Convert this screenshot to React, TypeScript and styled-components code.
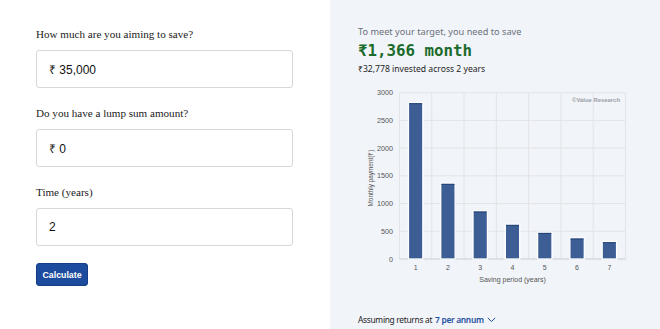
import styled, { createGlobalStyle } from 'styled-components';

const GlobalStyle = createGlobalStyle`
  html, body {
    margin: 0;
    padding: 0;
    background: #ffffff;
  }
  * {
    box-sizing: border-box;
  }
`;

const Page = styled.div`
  display: flex;
  width: 660px;
  height: 329px;
  overflow: hidden;
`;

const FormPanel = styled.section`
  width: 330px;
  display: flex;
  flex-direction: column;
  align-items: flex-start;
  padding: 26px 37px 0 36px;
  background: #ffffff;
`;

const Field = styled.div`
  width: 100%;
  display: flex;
  flex-direction: column;
  margin-bottom: 17px;
`;

const Label = styled.label`
  font-family: "Liberation Serif", "Times New Roman", serif;
  font-size: 11.1px;
  line-height: 16px;
  color: #1a1a1a;
  margin-bottom: 8px;
`;

const InputBox = styled.div`
  height: 38px;
  width: 100%;
  display: flex;
  align-items: center;
  padding: 0 12px;
  border: 1px solid #d7d7d7;
  border-radius: 3px;
  font-family: "Liberation Sans", Arial, sans-serif;
  font-size: 12px;
  color: #111;
`;

const Button = styled.button`
  width: 52px;
  height: 23px;
  padding: 0;
  border: 1px solid #143e86;
  border-radius: 3px;
  background: #1d4b9d;
  color: #ffffff;
  font-family: "Liberation Sans", Arial, sans-serif;
  font-weight: 700;
  font-size: 8.8px;
`;

const ResultPanel = styled.section`
  flex: 1;
  display: flex;
  flex-direction: column;
  padding: 25px 0 0 28px;
  background: #f1f4f9;
  font-family: "Noto Sans", "Open Sans", sans-serif;
`;

const Lead = styled.div`
  font-size: 9.2px;
  line-height: 14px;
  color: #6b717b;
`;

const Amount = styled.div`
  font-family: "DejaVu Sans Mono", "Liberation Mono", monospace;
  font-weight: 700;
  font-size: 15.8px;
  line-height: 22px;
  color: #1b6b2b;
  margin-top: 1px;
`;

const Sub = styled.div`
  font-size: 8.6px;
  line-height: 14px;
  color: #1e1e1e;
`;

const ChartSvg = styled.svg`
  display: block;
  margin-top: 8px;
`;

const Footer = styled.div`
  display: flex;
  align-items: center;
  gap: 3px;
  margin-top: 23px;
  font-size: 8.4px;
  letter-spacing: -0.3px;
  line-height: 14px;
  color: #1e1e1e;
`;

const Accent = styled.span`
  color: #1d4f9e;
  font-weight: 600;
`;

const values = [2820, 1366, 866, 626, 481, 379, 312];

const Chart = () => {
  const left = 41.5;
  const right = 267.5;
  const top = 8.7;
  const bottom = 175;
  const colW = (right - left) / 7;
  const scale = (bottom - top) / 3000;
  const ticks = [0, 500, 1000, 1500, 2000, 2500, 3000];
  const barW = 14.4;

  return (
    <ChartSvg width={282} height={206} viewBox="0 0 282 206">
      {ticks.map((t) => (
        <line key={t} x1={left} x2={right} y1={bottom - t * scale} y2={bottom - t * scale} stroke="#e2e4e8" strokeWidth={1} />
      ))}
      {Array.from({ length: 8 }).map((_, i) => (
        <line key={i} x1={left + i * colW} x2={left + i * colW} y1={top} y2={bottom} stroke="#e2e4e8" strokeWidth={1} />
      ))}
      <line x1={left} x2={right} y1={bottom} y2={bottom} stroke="#cfd3da" strokeWidth={1} />
      {ticks.map((t) => (
        <text
          key={t}
          x={35}
          y={bottom - t * scale + 2.5}
          textAnchor="end"
          fontSize={7.2}
          fill="#555"
          fontFamily="'Liberation Sans', Arial, sans-serif"
        >
          {t}
        </text>
      ))}
      {values.map((v, i) => {
        const cx = left + colW * (i + 0.5);
        const h = v * scale;
        return (
          <g key={i}>
            <rect x={cx - barW / 2} y={bottom - h} width={barW} height={h} fill="#3d5e94" stroke="#ffffff" strokeWidth={1.3} />
            <line x1={cx - barW / 2 + 0.7} x2={cx + barW / 2 - 0.7} y1={bottom - h + 1} y2={bottom - h + 1} stroke="#1f3f75" strokeWidth={1} />
            <text
              x={cx}
              y={185.5}
              textAnchor="middle"
              fontSize={7}
              fill="#555"
              fontFamily="'Liberation Sans', Arial, sans-serif"
            >
              {i + 1}
            </text>
          </g>
        );
      })}
      <text
        x={154.5}
        y={197.5}
        textAnchor="middle"
        fontSize={7}
        fill="#555"
        fontFamily="'Liberation Sans', Arial, sans-serif"
      >
        Saving period (years)
      </text>
      <text
        transform="translate(14.5 94) rotate(-90)"
        textAnchor="middle"
        fontSize={6.4}
        fill="#555"
        fontFamily="'Liberation Sans', Arial, sans-serif"
      >
        Monthly payment(₹)
      </text>
      <text
        x={262}
        y={18}
        textAnchor="end"
        fontSize={5.9}
        fontWeight={700}
        fill="#9a9ea6"
        fontFamily="'Liberation Sans', Arial, sans-serif"
      >
        ©Value Research
      </text>
    </ChartSvg>
  );
};

const Chevron = () => (
  <svg width={9} height={6} viewBox="0 0 9 6">
    <path d="M0.8 0.8 L4.5 4.6 L8.2 0.8" fill="none" stroke="#1d4f9e" strokeWidth={1} />
  </svg>
);

const App = () => {
  return (
    <>
      <GlobalStyle />
      <Page>
        <FormPanel>
          <Field>
            <Label>How much are you aiming to save?</Label>
            <InputBox>₹ 35,000</InputBox>
          </Field>
          <Field>
            <Label>Do you have a lump sum amount?</Label>
            <InputBox>₹ 0</InputBox>
          </Field>
          <Field>
            <Label>Time (years)</Label>
            <InputBox>2</InputBox>
          </Field>
          <Button>Calculate</Button>
        </FormPanel>
        <ResultPanel>
          <Lead>To meet your target, you need to save</Lead>
          <Amount>₹1,366 month</Amount>
          <Sub>₹32,778 invested across 2 years</Sub>
          <Chart />
          <Footer>
            <span>Assuming returns at</span>
            <Accent>7 per annum</Accent>
            <Chevron />
          </Footer>
        </ResultPanel>
      </Page>
    </>
  );
};

export default App;
